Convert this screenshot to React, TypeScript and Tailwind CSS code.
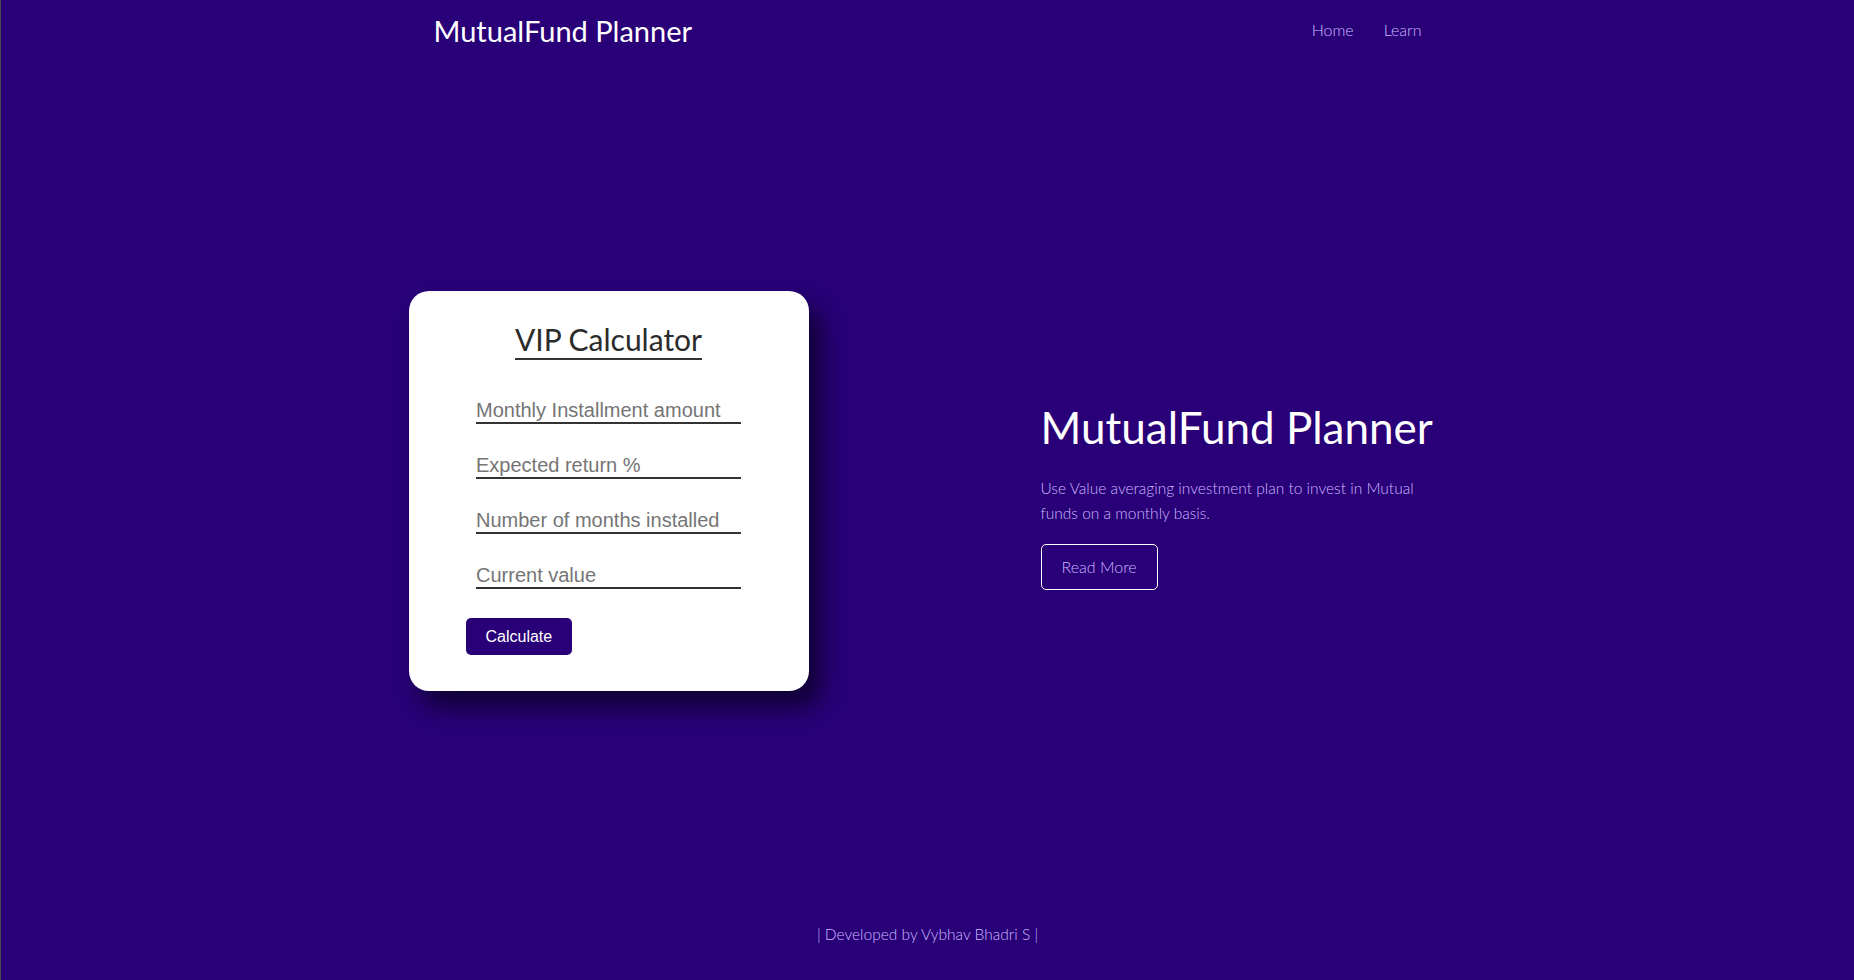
import { useState } from 'react'

const fields = [
  { id: 'amount', placeholder: 'Monthly Installment amount' },
  { id: 'rate', placeholder: 'Expected return %' },
  { id: 'months', placeholder: 'Number of months installed' },
  { id: 'current', placeholder: 'Current value' },
]

function Calculator() {
  const [values, setValues] = useState<Record<string, string>>({})

  return (
    <div className="w-[400px] rounded-[20px] bg-white px-[57px] pb-[36px] pt-[30px] shadow-[12px_16px_24px_rgba(8,0,30,0.75)]">
      <div className="text-center">
        <h2 className="inline-block border-b-2 border-[#333] pb-[1px] font-['Lato',sans-serif] text-[30px] leading-[36px] text-[#2b2b2b]">
          VIP Calculator
        </h2>
      </div>
      <form className="mt-[39px]" onSubmit={e => e.preventDefault()}>
        {fields.map(f => (
          <input
            key={f.id}
            type="text"
            value={values[f.id] ?? ''}
            onChange={e => setValues({ ...values, [f.id]: e.target.value })}
            placeholder={f.placeholder}
            className="mx-auto mb-[30px] block h-[25px] w-[265px] border-b-2 border-[#333] bg-transparent font-['Liberation_Sans',Arial,sans-serif] text-[20px] leading-[23px] text-[#333] outline-none placeholder:text-[#757575]"
          />
        ))}
        <button
          type="submit"
          className="-mt-[1px] h-[37px] rounded-[5px] bg-[#290078] px-5 font-['Liberation_Sans',Arial,sans-serif] text-[16px] text-white"
        >
          Calculate
        </button>
      </form>
    </div>
  )
}

export default function App() {
  return (
    <div className="flex min-h-screen flex-col border-l border-[#4a4a4a] bg-[#290078] font-['Lato',sans-serif]">
      <header className="mx-auto flex h-[60px] w-[988px] items-center justify-between">
        <a href="#" className="text-[29px] leading-none text-white">MutualFund Planner</a>
        <nav className="flex gap-[30px] text-[16px] font-light text-[#c9b9ff]">
          <a href="#">Home</a>
          <a href="#">Learn</a>
        </nav>
      </header>

      <main className="flex flex-1 items-center pt-[32px]">
        <div className="mx-auto flex w-[1038px] items-center gap-[232px]">
          <Calculator />
          <div className="mt-[6px] w-[400px]">
            <h1 className="whitespace-nowrap text-[44px] leading-[58px] text-white">MutualFund Planner</h1>
            <p className="mt-[20px] text-[15.5px] font-light leading-[25px] text-[#c9b9ff]">
              Use Value averaging investment plan to invest in Mutual funds on a monthly basis.
            </p>
            <button className="mt-[18px] h-[46px] rounded-[5px] border border-white px-[20px] text-[16px] font-light text-[#c9b9ff]">
              Read More
            </button>
          </div>
        </div>
      </main>

      <footer className="flex h-[90px] items-center justify-center text-[15.5px] font-light text-[#c9b9ff]">
        | Developed by Vybhav Bhadri S |
      </footer>
    </div>
  )
}
